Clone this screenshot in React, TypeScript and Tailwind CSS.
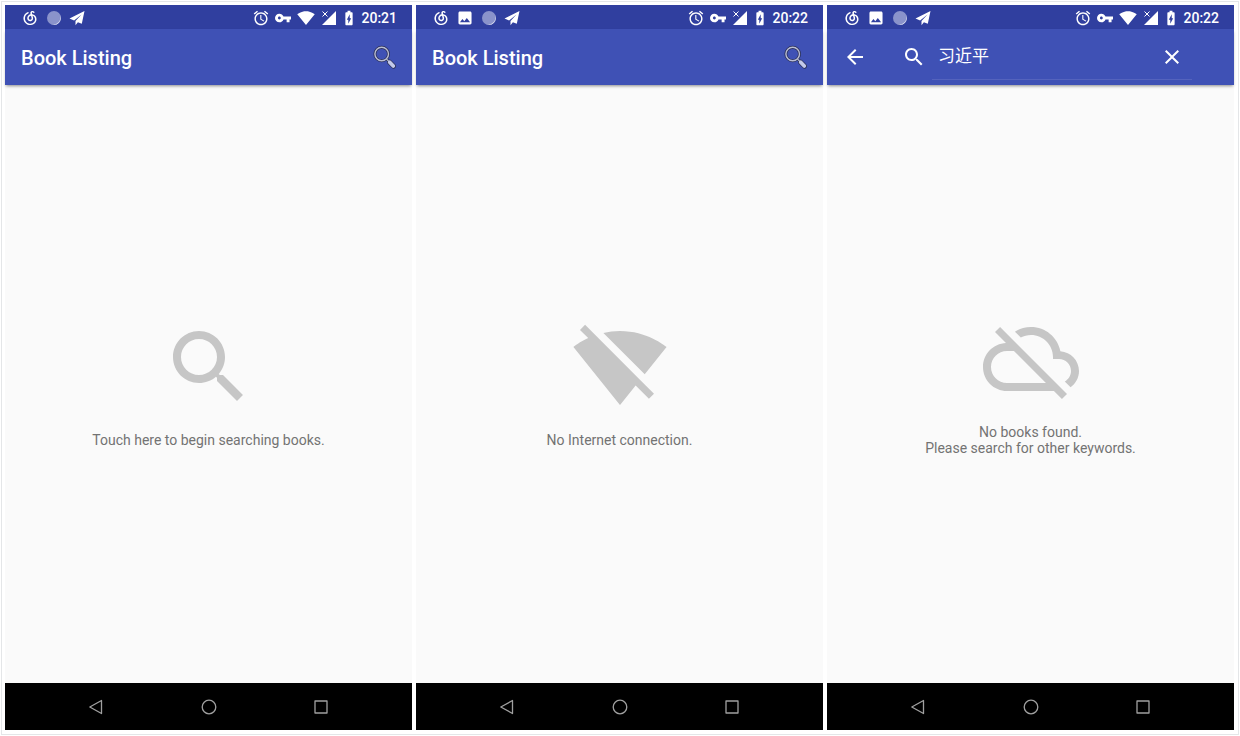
import { useState, type ReactNode } from 'react';
import { RiNeteaseCloudMusicLine } from 'react-icons/ri';

const SEARCH_PATH =
  'M15.5 14h-.79l-.28-.27C15.41 12.59 16 11.11 16 9.5 16 5.91 13.09 3 9.5 3S3 5.91 3 9.5 5.91 16 9.5 16c1.61 0 3.09-.59 4.23-1.57l.27.28v.79l5 4.99L20.49 19l-4.99-5zm-6 0C7.01 14 5 11.99 5 9.5S7.01 5 9.5 5 14 7.01 14 9.5 11.99 14 9.5 14z';
const WIFI_OFF_PATH =
  'M23.64 7c-.45-.34-4.93-4-11.64-4-1.5 0-2.89.19-4.15.48L18.18 13.8 23.64 7zm-6.6 8.22L3.27 1.44 2 2.72l2.05 2.06C1.91 5.76.59 6.82.36 7l11.63 14.49.01.01.01-.01 3.9-4.86 3.32 3.32 1.27-1.27-3.46-3.46z';
const CLOUD_OFF_PATH =
  'M19.35 10.04C18.67 6.59 15.64 4 12 4c-1.48 0-2.85.43-4.01 1.17l1.46 1.46C10.21 6.23 11.08 6 12 6c3.04 0 5.5 2.46 5.5 5.5v.5H19c1.66 0 3 1.34 3 3 0 1.13-.64 2.11-1.56 2.62l1.45 1.45C23.16 18.16 24 16.68 24 15c0-2.64-2.05-4.78-4.65-4.96zM3 5.27l2.75 2.74C2.56 8.15 0 10.77 0 14c0 3.31 2.69 6 6 6h11.73l2 2L21 20.73 4.27 4 3 5.27zM7.73 10l8 8H6c-2.21 0-4-1.79-4-4s1.79-4 4-4h1.73z';
const BACK_PATH = 'M20 11H7.83l5.59-5.59L12 4l-8 8 8 8 1.41-1.41L7.83 13H20v-2z';
const CLOSE_PATH =
  'M19 6.41L17.59 5 12 10.59 6.41 5 5 6.41 10.59 12 5 17.59 6.41 19 12 13.41 17.59 19 19 17.59 13.41 12z';
const IMAGE_PATH =
  'M21 19V5c0-1.1-.9-2-2-2H5c-1.1 0-2 .9-2 2v14c0 1.1.9 2 2 2h14c1.1 0 2-.9 2-2zM8.5 13.5l2.5 3.01L14.5 12l4.5 6H5l3.5-4.5z';
const ALARM_PATH =
  'M22 5.72l-4.6-3.86-1.29 1.53 4.6 3.86L22 5.72zM7.88 3.39L6.6 1.86 2 5.71l1.29 1.53 4.59-3.85zM12.5 8H11v6l4.75 2.85.75-1.23-4-2.37V8zM12 4c-4.97 0-9 4.03-9 9s4.02 9 9 9c4.97 0 9-4.03 9-9s-4.03-9-9-9zm0 16c-3.87 0-7-3.13-7-7s3.13-7 7-7 7 3.13 7 7-3.13 7-7 7z';
const KEY_PATH =
  'M12.65 10C11.83 7.67 9.61 6 7 6c-3.31 0-6 2.69-6 6s2.69 6 6 6c2.61 0 4.83-1.67 5.65-4H17v4h4v-4h2v-4H12.65zM7 14c-1.1 0-2-.9-2-2s.9-2 2-2 2 .9 2 2-.9 2-2 2z';
const WIFI_PATH =
  'M12.01 21.49L23.64 7c-.45-.34-4.93-4-11.64-4C5.28 3 .81 6.66.36 7l11.63 14.49.01.01.01-.01z';
const BATTERY_PATH =
  'M15.67 4H14V2h-4v2H8.33C7.6 4 7 4.6 7 5.33v15.33C7 21.4 7.6 22 8.33 22h7.33c.74 0 1.34-.6 1.34-1.33V5.33C17 4.6 16.4 4 15.67 4zM11 20v-5.5H9L13 7v5.5h2L11 20z';

interface GlyphProps {
  d: string;
  className?: string;
  viewBox?: string;
}

function Glyph({ d, className = 'w-6 h-6', viewBox = '0 0 24 24' }: GlyphProps) {
  return (
    <svg viewBox={viewBox} className={`shrink-0 ${className}`} fill="currentColor" aria-hidden="true">
      <path d={d} />
    </svg>
  );
}

interface StatusBarProps {
  time: string;
  screenshot?: boolean;
  wifi?: boolean;
}

function StatusBar({ time, screenshot = false, wifi = false }: StatusBarProps) {
  return (
    <div className="flex h-6 items-center justify-between bg-[#303f9f] pl-4 pr-[15px] pt-px text-white">
      {/* Notifications */}
      <div className="flex items-center gap-[7px]">
        <RiNeteaseCloudMusicLine size={18} />
        {screenshot && <Glyph d={IMAGE_PATH} viewBox="1 1 22 22" className="mr-px w-4 h-4" />}
        <svg viewBox="0 0 16 16" className="w-4 h-4" aria-hidden="true">
          <circle cx="8" cy="8" r="7" fill="#8a93cb" />
          <path d="M14 4.6A7 7 0 0 1 5 14.3 7.4 7.4 0 0 0 14 4.6z" fill="#e4e6f4" />
        </svg>
        <svg viewBox="0 0 16 16" className="w-4 h-4" fill="currentColor" aria-hidden="true">
          <path d="M15.5 1 .5 8.600l4.600 1.800 7.400-6L6.500 11v4.200l2.400-3 3.900 1.600z" />
        </svg>
      </div>

      {/* System icons */}
      <div className="flex items-center gap-1.5">
        <Glyph d={ALARM_PATH} viewBox="1 1 22 22" className="w-4 h-4" />
        <Glyph d={KEY_PATH} viewBox="1 1 22 22" className="w-4 h-4" />
        {wifi && <Glyph d={WIFI_PATH} className="w-[18px] h-[18px]" />}
        <svg viewBox="0 0 16 16" className="w-4 h-4" aria-hidden="true">
          <path d="M15 1v14H1z" fill="currentColor" />
          <path d="M1.500 1.500l5 5M6.500 1.500l-5 5" stroke="currentColor" strokeWidth="1" />
        </svg>
        <Glyph d={BATTERY_PATH} viewBox="4 1 16 22" className="w-3 h-4" />
        <span className="text-sm font-medium leading-4">{time}</span>
      </div>
    </div>
  );
}

function TitleBar() {
  return (
    <header className="flex h-14 items-center justify-between bg-[#3f51b5] px-4 text-white shadow-[0_2px_3px_-1px_rgba(0,0,0,0.45)]">
      <h1 className="pt-0.5 text-xl font-medium">Book Listing</h1>
      <button aria-label="Search">
        <svg viewBox="0 0 24 24" className="w-6 h-6" fill="none" strokeLinecap="round" aria-hidden="true">
          <circle cx="9.700" cy="9" r="6.800" stroke="#2b3056" strokeWidth="3" />
          <path d="M14.600 14.200l6.400 6.400" stroke="#2b3056" strokeWidth="2.500" />
          <path d="M17.600 17.200l3.800 3.900" stroke="#2b3056" strokeWidth="5" />
          <circle cx="9.700" cy="9" r="6.800" stroke="#b9bdd6" strokeWidth="1.400" />
          <path d="M14.800 14.300l2 2" stroke="#b9bdd6" strokeWidth="1.200" />
          <path d="M17.700 17.300l3.600 3.700" stroke="#c3c9ea" strokeWidth="3.800" />
        </svg>
      </button>
    </header>
  );
}

function SearchBar() {
  const [query, setQuery] = useState('习近平');

  return (
    <header className="flex h-14 items-center bg-[#3f51b5] pl-4 pr-[42px] text-white shadow-[0_2px_3px_-1px_rgba(0,0,0,0.45)]">
      <button aria-label="Back">
        <Glyph d={BACK_PATH} />
      </button>
      <label htmlFor="query" aria-label="Search books" className="ml-[35px] mr-1.5">
        <Glyph d={SEARCH_PATH} />
      </label>
      <div className="flex h-[46px] min-w-0 flex-1 items-center border-b border-[#5463bd] pl-1.5 pr-2">
        <input
          id="query"
          type="text"
          value={query}
          onChange={e => setQuery(e.target.value)}
          className="min-w-0 flex-1 bg-transparent pt-px font-['Roboto','Noto_Sans_CJK_SC',sans-serif] text-[17px] outline-none"
        />
        <button aria-label="Clear" onClick={() => setQuery('')}>
          <Glyph d={CLOSE_PATH} />
        </button>
      </div>
    </header>
  );
}

function NavBar() {
  return (
    <nav className="flex h-[47px] items-center justify-between bg-black px-[83px] text-[#a0a0a0]">
      <button aria-label="Back">
        <svg viewBox="0 0 16 16" className="w-4 h-4" fill="none" stroke="currentColor" strokeWidth="1.300" strokeLinejoin="round">
          <path d="M13.500 1.500v13L1.800 8z" />
        </svg>
      </button>
      <button aria-label="Home">
        <svg viewBox="0 0 16 16" className="w-4 h-4" fill="none" stroke="currentColor" strokeWidth="1.300">
          <circle cx="8" cy="8" r="6.800" />
        </svg>
      </button>
      <button aria-label="Recent apps">
        <svg viewBox="0 0 16 16" className="w-4 h-4" fill="none" stroke="currentColor" strokeWidth="1.300" strokeLinejoin="round">
          <path d="M2 2h12v12H2z" />
        </svg>
      </button>
    </nav>
  );
}

interface PhoneProps extends StatusBarProps {
  header: ReactNode;
  icon: string;
  lines: string[];
}

function Phone({ header, icon, lines, ...status }: PhoneProps) {
  return (
    <section className="flex min-w-0 flex-col bg-[#fafafa]">
      <StatusBar {...status} />
      {header}
      <div className="flex flex-1 flex-col items-center justify-center gap-[17px] pb-0.5 text-center text-sm leading-4 text-[#737373]">
        <Glyph d={icon} className="w-24 h-24 text-[#c6c6c6]" />
        <div>
          {lines.map(line => (
            <p key={line}>{line}</p>
          ))}
        </div>
      </div>
      <NavBar />
    </section>
  );
}

export default function App() {
  return (
    <div className="flex min-h-screen bg-white p-px font-['Roboto',sans-serif]">
      <div className="grid flex-1 grid-cols-3 gap-1 border border-[#e4e6e8] pt-[3px] pr-1 pb-1 pl-[3px]">
        <Phone
          time="20:21"
          wifi
          header={<TitleBar />}
          icon={SEARCH_PATH}
          lines={['Touch here to begin searching books.']}
        />
        <Phone
          time="20:22"
          screenshot
          header={<TitleBar />}
          icon={WIFI_OFF_PATH}
          lines={['No Internet connection.']}
        />
        <Phone
          time="20:22"
          screenshot
          wifi
          header={<SearchBar />}
          icon={CLOUD_OFF_PATH}
          lines={['No books found.', 'Please search for other keywords.']}
        />
      </div>
    </div>
  );
}
